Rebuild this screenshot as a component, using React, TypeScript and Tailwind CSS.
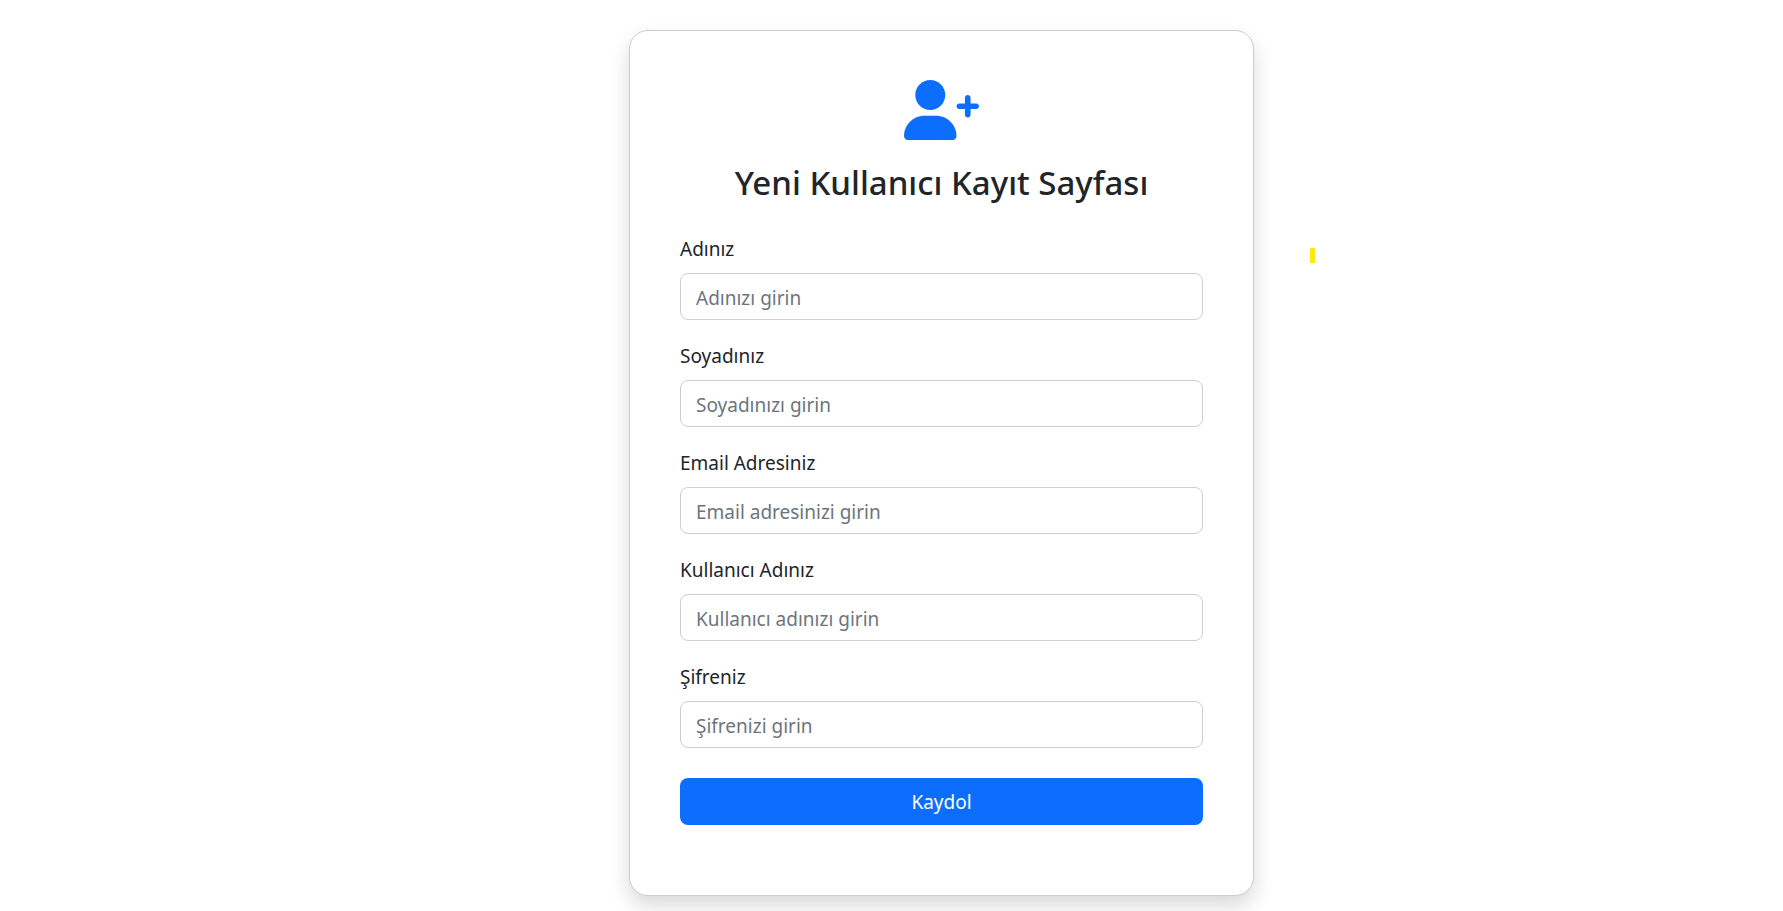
import React from "react";

type Field = {
  id: string;
  label: string;
  placeholder: string;
  type: string;
};

const fields: Field[] = [
  { id: "ad", label: "Adınız", placeholder: "Adınızı girin", type: "text" },
  { id: "soyad", label: "Soyadınız", placeholder: "Soyadınızı girin", type: "text" },
  { id: "email", label: "Email Adresiniz", placeholder: "Email adresinizi girin", type: "email" },
  { id: "kullanici", label: "Kullanıcı Adınız", placeholder: "Kullanıcı adınızı girin", type: "text" },
  { id: "sifre", label: "Şifreniz", placeholder: "Şifrenizi girin", type: "password" },
];

function UserPlusIcon({ className }: { className: string }) {
  return (
    <svg viewBox="0 0 640 512" fill="currentColor" className={className} aria-hidden="true">
      <path d="M224 256c70.7 0 128-57.31 128-128S294.7 0 224 0 96 57.31 96 128s57.3 128 128 128z" />
      <path d="M274.7 304H173.3C77.61 304 0 381.6 0 477.3 0 496.5 15.52 512 34.66 512h378.7c19.14 0 34.64-15.5 34.64-34.7C448 381.6 370.4 304 274.7 304z" />
      <path d="M616 200h-48v-48c0-13.2-10.7-24-24-24s-24 10.8-24 24v48h-48c-13.2 0-24 10.8-24 24s10.8 24 24 24h48v48c0 13.3 10.8 24 24 24s24-10.7 24-24v-48h48c13.3 0 24-10.7 24-24s-10.7-24-24-24z" />
    </svg>
  );
}

function FormField({ id, label, placeholder, type }: Field) {
  return (
    <div className="mb-5 flex flex-col gap-2">
      <label htmlFor={id} className="self-start leading-8">
        {label}
      </label>
      <input
        id={id}
        name={id}
        type={type}
        placeholder={placeholder}
        className="h-[47px] w-full rounded-lg border border-[#cdd0d2] bg-white px-[15px] pt-0.5 outline-none placeholder:text-[#6c757d] focus:border-[#86b7fe]"
      />
    </div>
  );
}

export default function App() {
  return (
    <main
      lang="tr"
      className="flex min-h-screen items-start justify-center bg-white pt-[30px] pb-[15px] font-['Segoe_UI','Noto_Sans',sans-serif] text-[19px] text-[#212529] lg:pl-[100px]"
    >
      <section className="relative w-full max-w-[625px] rounded-[19px] border border-[#cccccc] bg-white px-[50px] pt-[49px] pb-[50px] shadow-[0_10px_20px_rgba(0,0,0,0.15)]">
        <UserPlusIcon className="mx-auto h-[60px] w-[75px] text-[#0d6efd]" />
        <h1 className="mt-5 mb-7 text-center text-[33px] leading-[45px] font-medium">
          Yeni Kullanıcı Kayıt Sayfası
        </h1>
        <form onSubmit={(event) => event.preventDefault()}>
          {fields.map((field) => (
            <FormField key={field.id} {...field} />
          ))}
          <button
            type="submit"
            className="mt-[30px] mb-5 block h-[47px] w-full rounded-lg bg-[#0d6efd] pt-0.5 text-white"
          >
            Kaydol
          </button>
        </form>
        <span aria-hidden="true" className="absolute top-[217px] left-full ml-[57px] h-[15px] w-[5px] bg-[#fde910]" />
      </section>
    </main>
  );
}
